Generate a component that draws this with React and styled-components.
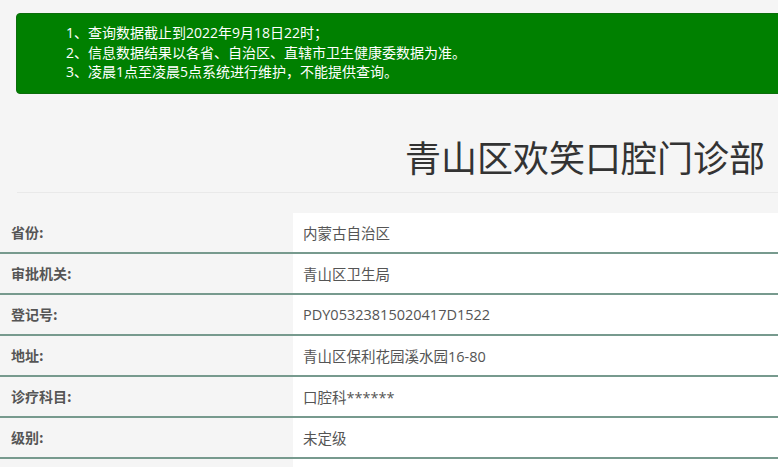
import styled, { createGlobalStyle } from "styled-components";

const GlobalStyle = createGlobalStyle`
  html, body {
    margin: 0;
    padding: 0;
    background: #f5f5f5;
    overflow: hidden;
  }
  body {
    font-family: "Open Sans", "Noto Sans CJK SC", sans-serif;
  }
`;

const notices = [
  "1、查询数据截止到2022年9月18日22时；",
  "2、信息数据结果以各省、自治区、直辖市卫生健康委数据为准。",
  "3、凌晨1点至凌晨5点系统进行维护，不能提供查询。",
];

const fields = [
  { label: "省份:", value: "内蒙古自治区" },
  { label: "审批机关:", value: "青山区卫生局" },
  { label: "登记号:", value: "PDY05323815020417D1522" },
  { label: "地址:", value: "青山区保利花园溪水园16-80" },
  { label: "诊疗科目:", value: "口腔科******" },
  { label: "级别:", value: "未定级" },
  { label: "", value: "" },
];

const App = () => {
  return (
    <Page>
      <GlobalStyle />
      <Notice>
        {notices.map((n) => (
          <NoticeLine key={n}>{n}</NoticeLine>
        ))}
      </Notice>
      <Title>青山区欢笑口腔门诊部</Title>
      <Divider />
      <Table>
        {fields.map((f, i) => (
          <Row key={i}>
            <Label>{f.label}</Label>
            <Value>{f.value}</Value>
          </Row>
        ))}
      </Table>
    </Page>
  );
};

const Page = styled.div`
  width: 778px;
  padding-top: 13px;
`;

const Notice = styled.div`
  margin-left: 16px;
  margin-right: -10px;
  background: #008000;
  border: 1px solid #0b6e0b;
  border-radius: 4px;
  padding: 9px 0 11px 49px;
  color: #fff;
  font-size: 14px;
  line-height: 19.5px;
`;

const NoticeLine = styled.div`
  white-space: nowrap;
`;

const Title = styled.h1`
  margin: 0;
  padding: 38px 13px 12px 0;
  text-align: right;
  font-family: "Noto Sans CJK SC", sans-serif;
  font-weight: 400;
  font-size: 36px;
  line-height: 48px;
  color: #333;
`;

const Divider = styled.div`
  margin-left: 17px;
  height: 1px;
  background: #e9e9e9;
`;

const Table = styled.div`
  margin-top: 20px;
`;

const Row = styled.div`
  display: grid;
  grid-template-columns: 293px 1fr;
  border-bottom: 2px solid #779a8e;
`;

const Label = styled.div`
  height: 39px;
  display: flex;
  align-items: center;
  padding-left: 11px;
  font-size: 14px;
  font-weight: 700;
  color: #555;
  font-family: "Noto Sans CJK SC", sans-serif;
`;

const Value = styled.div`
  height: 39px;
  display: flex;
  align-items: center;
  padding-left: 10px;
  background: #fff;
  font-size: 14.5px;
  color: #555;
`;

export default App;
